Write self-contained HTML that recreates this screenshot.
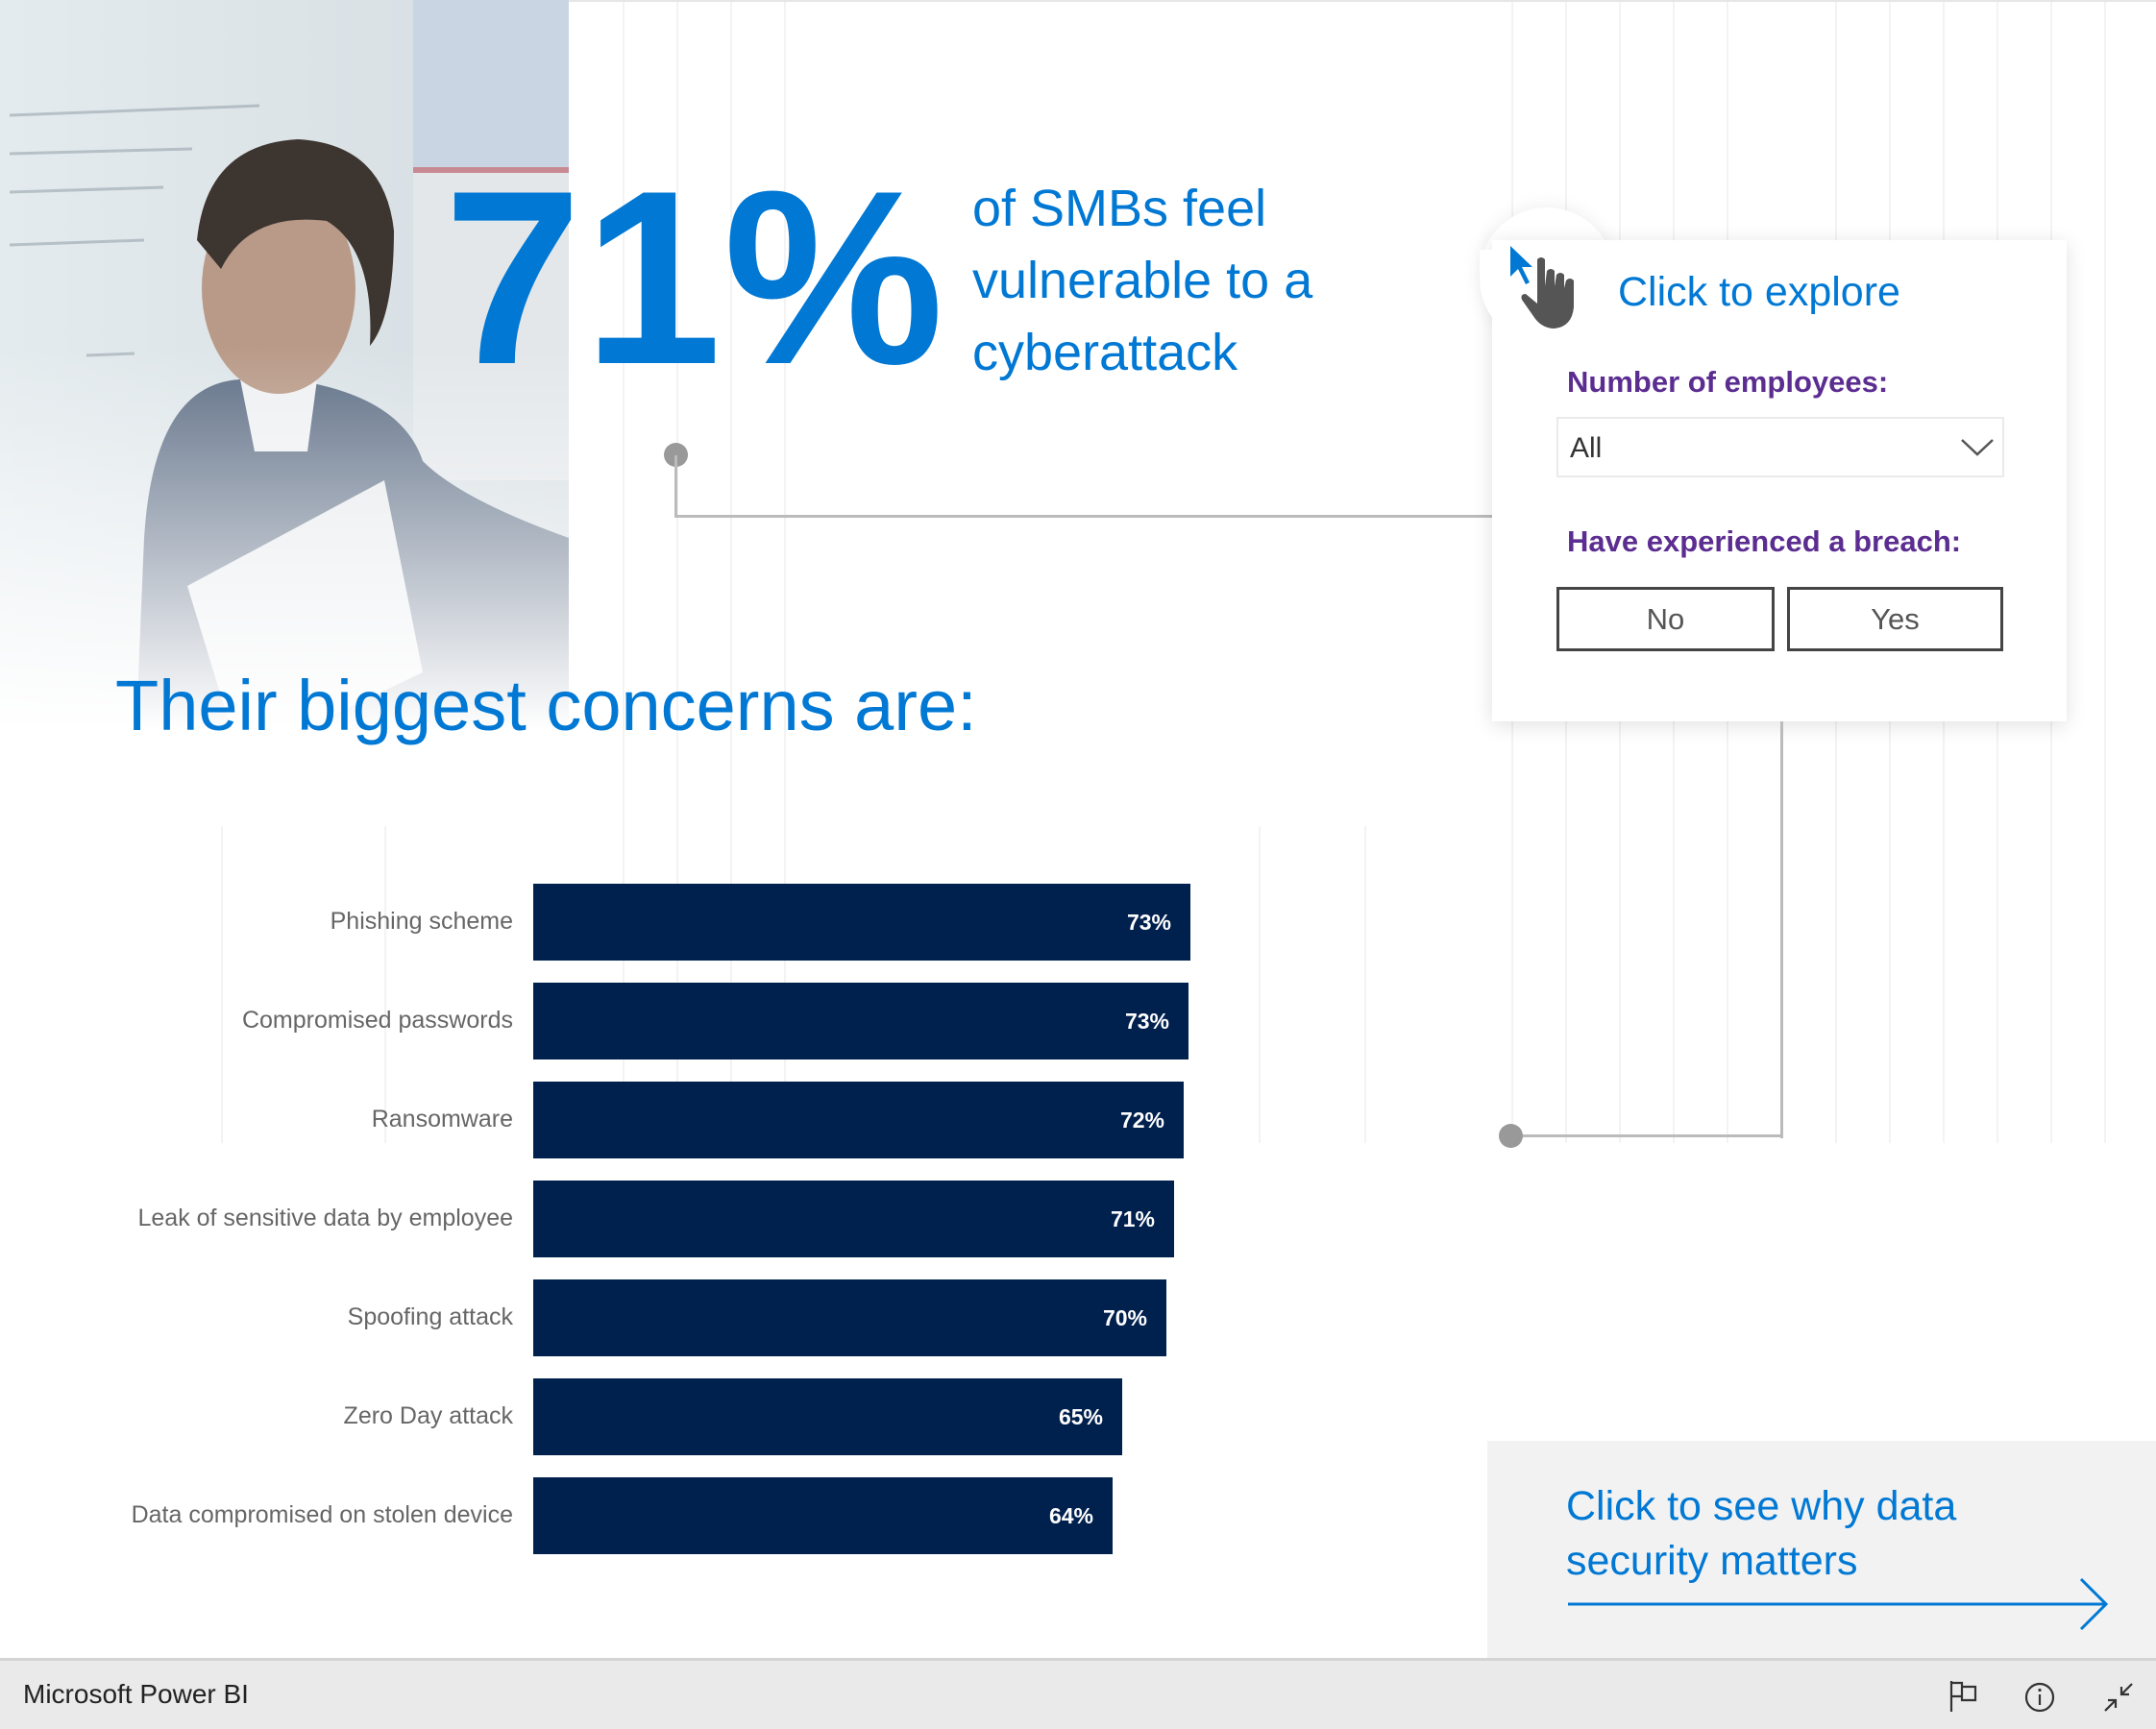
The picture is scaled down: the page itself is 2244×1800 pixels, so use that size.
<!DOCTYPE html>
<html><head><meta charset="utf-8"><style>
*{margin:0;padding:0;box-sizing:border-box}
body{width:2244px;height:1800px;position:relative;overflow:hidden;background:#fff;font-family:"Liberation Sans",sans-serif}
.a{position:absolute}
.vl{position:absolute;top:0;width:2px;background:#f3f3f3}
.lbl{position:absolute;right:1710px;font-size:25px;color:#666;text-align:right;white-space:nowrap}
.bar{position:absolute;left:555px;height:80px;background:#00204e;color:#fff;font-weight:bold;font-size:23px;text-align:right;padding-right:20px;line-height:80px}
</style></head><body>
<div class="vl" style="left:648px;height:1190px"></div>
<div class="vl" style="left:704px;height:1190px"></div>
<div class="vl" style="left:760px;height:1190px"></div>
<div class="vl" style="left:816px;height:1190px"></div>
<div class="vl" style="left:1573px;height:1190px"></div>
<div class="vl" style="left:1629px;height:1190px"></div>
<div class="vl" style="left:1685px;height:1190px"></div>
<div class="vl" style="left:1741px;height:1190px"></div>
<div class="vl" style="left:1797px;height:1190px"></div>
<div class="vl" style="left:1910px;height:1190px"></div>
<div class="vl" style="left:1966px;height:1190px"></div>
<div class="vl" style="left:2022px;height:1190px"></div>
<div class="vl" style="left:2078px;height:1190px"></div>
<div class="vl" style="left:2134px;height:1190px"></div>
<div class="vl" style="left:2190px;height:1190px"></div>
<div class="vl" style="left:230px;top:860px;height:330px"></div>
<div class="vl" style="left:400px;top:860px;height:330px"></div>
<div class="vl" style="left:1310px;top:860px;height:330px"></div>
<div class="vl" style="left:1420px;top:860px;height:330px"></div>
<div class="a" style="left:0;top:0;width:2244px;height:2px;background:#e6e6e6"></div>

<svg class="a" style="left:0;top:0" width="592" height="800" viewBox="0 0 592 800">
<defs>
<linearGradient id="fade" x1="0" y1="0" x2="0" y2="1">
<stop offset="0.45" stop-color="#fff" stop-opacity="0"/>
<stop offset="0.95" stop-color="#fff" stop-opacity="1"/>
</linearGradient>
<linearGradient id="bg" x1="0" y1="0" x2="1" y2="0">
<stop offset="0" stop-color="#e4ebee"/><stop offset="1" stop-color="#d5dde2"/>
</linearGradient>
</defs>
<rect width="592" height="800" fill="url(#bg)"/>
<rect x="430" y="0" width="162" height="180" fill="#c9d5e2"/>
<rect x="430" y="174" width="162" height="6" fill="#c88a92"/>
<rect x="430" y="180" width="162" height="320" fill="#e3e7ea"/>
<g stroke="#8a97a2" stroke-width="3" opacity="0.5">
<line x1="10" y1="120" x2="270" y2="110"/><line x1="10" y1="160" x2="200" y2="155"/><line x1="10" y1="200" x2="170" y2="195"/><line x1="10" y1="255" x2="150" y2="250"/><line x1="90" y1="370" x2="140" y2="368"/></g>
<path d="M150 560 Q160 400 250 395 L330 400 Q420 420 440 480 Q480 520 592 560 L592 800 L140 800 Z" fill="#5f6f86"/>
<path d="M250 395 L330 395 L320 470 L265 470 Z" fill="#eef0f2"/>
<ellipse cx="290" cy="300" rx="80" ry="110" fill="#b99a88"/>
<path d="M205 250 Q215 150 310 145 Q400 150 410 240 Q410 330 385 360 Q390 260 340 230 Q260 220 230 280 Z" fill="#3d3530"/>
<path d="M195 610 L400 500 L440 700 L250 790 Z" fill="#e6e9ec"/>
<rect width="592" height="800" fill="url(#fade)"/>
</svg>

<div class="a" style="left:462px;top:160px;font-size:258px;font-weight:bold;color:#0078d4;letter-spacing:2px;line-height:1">71%</div>
<div class="a" style="left:1012px;top:180px;font-size:54px;color:#0078d4;line-height:75px">of SMBs feel<br>vulnerable to a<br>cyberattack</div>

<div class="a" style="left:691px;top:461px;width:25px;height:25px;border-radius:50%;background:#999"></div>
<div class="a" style="left:702px;top:474px;width:3px;height:65px;background:#bbb"></div>
<div class="a" style="left:702px;top:536px;width:860px;height:3px;background:#bbb"></div>

<div class="a" style="left:1540px;top:216px;width:140px;height:140px;border-radius:50%;background:#fff;box-shadow:0 0 20px rgba(0,0,0,.08)"></div>
<div class="a" style="left:1553px;top:250px;width:598px;height:501px;background:#fff;box-shadow:0 4px 20px rgba(0,0,0,.12)"></div>
<div class="a" style="left:1540px;top:260px;width:140px;height:100px;background:#fff;border-radius:0 0 0 70px"></div>
<svg class="a" style="left:1570px;top:254px" width="80" height="90" viewBox="0 0 80 90">
<path d="M2 2 L2 34 L10 26 L18 42 L22 40 L14 24 L25 24 Z" fill="#0078d4"/>
<path d="M30 16 Q34 12 38 16 L38 44 L40 28 Q44 24 48 28 L48 44 L50 32 Q54 28 58 32 L58 46 L60 38 Q64 34 68 38 L68 66 Q66 86 48 88 Q36 88 28 78 L14 58 Q12 52 18 52 L30 62 Z" fill="#555"/>
</svg>
<div class="a" style="left:1684px;top:280px;font-size:43px;color:#0078d4">Click to explore</div>
<div class="a" style="left:1631px;top:380px;font-size:31px;font-weight:bold;color:#5c2d91">Number of employees:</div>
<div class="a" style="left:1620px;top:434px;width:466px;height:63px;border:2px solid #eaeaea;background:#fff"></div>
<div class="a" style="left:1634px;top:450px;font-size:30px;color:#333">All</div>
<svg class="a" style="left:2040px;top:456px" width="36" height="20"><path d="M2 2 L18 17 L34 2" fill="none" stroke="#555" stroke-width="2.5"/></svg>
<div class="a" style="left:1631px;top:546px;font-size:31px;font-weight:bold;color:#5c2d91">Have experienced a breach:</div>
<div class="a" style="left:1620px;top:611px;width:227px;height:67px;border:3px solid #444;text-align:center;line-height:61px;font-size:31px;color:#555">No</div>
<div class="a" style="left:1860px;top:611px;width:225px;height:67px;border:3px solid #444;text-align:center;line-height:61px;font-size:31px;color:#555">Yes</div>

<div class="a" style="left:1853px;top:751px;width:3px;height:434px;background:#bbb"></div>
<div class="a" style="left:1573px;top:1181px;width:283px;height:3px;background:#bbb"></div>
<div class="a" style="left:1560px;top:1170px;width:25px;height:25px;border-radius:50%;background:#999"></div>

<div class="a" style="left:120px;top:692px;font-size:74px;color:#0078d4">Their biggest concerns are:</div>

<div class="lbl" style="top:945px">Phishing scheme</div>
<div class="bar" style="top:920px;width:684px">73%</div>
<div class="lbl" style="top:1048px">Compromised passwords</div>
<div class="bar" style="top:1023px;width:682px">73%</div>
<div class="lbl" style="top:1151px">Ransomware</div>
<div class="bar" style="top:1126px;width:677px">72%</div>
<div class="lbl" style="top:1254px">Leak of sensitive data by employee</div>
<div class="bar" style="top:1229px;width:667px">71%</div>
<div class="lbl" style="top:1357px">Spoofing attack</div>
<div class="bar" style="top:1332px;width:659px">70%</div>
<div class="lbl" style="top:1460px">Zero Day attack</div>
<div class="bar" style="top:1435px;width:613px">65%</div>
<div class="lbl" style="top:1563px">Data compromised on stolen device</div>
<div class="bar" style="top:1538px;width:603px">64%</div>

<div class="a" style="left:1548px;top:1500px;width:696px;height:227px;background:#f2f2f2"></div>
<div class="a" style="left:1630px;top:1540px;font-size:43px;color:#0078d4;line-height:57px">Click to see why data<br>security matters</div>
<svg class="a" style="left:1628px;top:1640px" width="570" height="60"><path d="M4 30 L564 30 M538 4 L564 30 L538 56" fill="none" stroke="#0078d4" stroke-width="3"/></svg>

<div class="a" style="left:0;top:1726px;width:2244px;height:74px;background:#eaeaea;border-top:3px solid #d4d4d4"></div>
<div class="a" style="left:24px;top:1748px;font-size:28px;color:#222">Microsoft Power BI</div>
<svg class="a" style="left:2028px;top:1748px" width="32" height="36"><path d="M3 2 V34 M3 4 H14 V18 H3 M14 8 H28 V22 H14 V18" fill="none" stroke="#333" stroke-width="2.2"/></svg>
<svg class="a" style="left:2106px;top:1750px" width="34" height="34"><circle cx="17" cy="17" r="14" fill="none" stroke="#333" stroke-width="2.2"/><line x1="17" y1="14" x2="17" y2="25" stroke="#333" stroke-width="2.2"/><circle cx="17" cy="9.5" r="1.6" fill="#333"/></svg>
<svg class="a" style="left:2188px;top:1750px" width="34" height="34"><path d="M31 3 L20 14 M20 6 V14 H28 M3 31 L14 20 M6 20 H14 V28" fill="none" stroke="#333" stroke-width="2.2"/></svg>
</body></html>
